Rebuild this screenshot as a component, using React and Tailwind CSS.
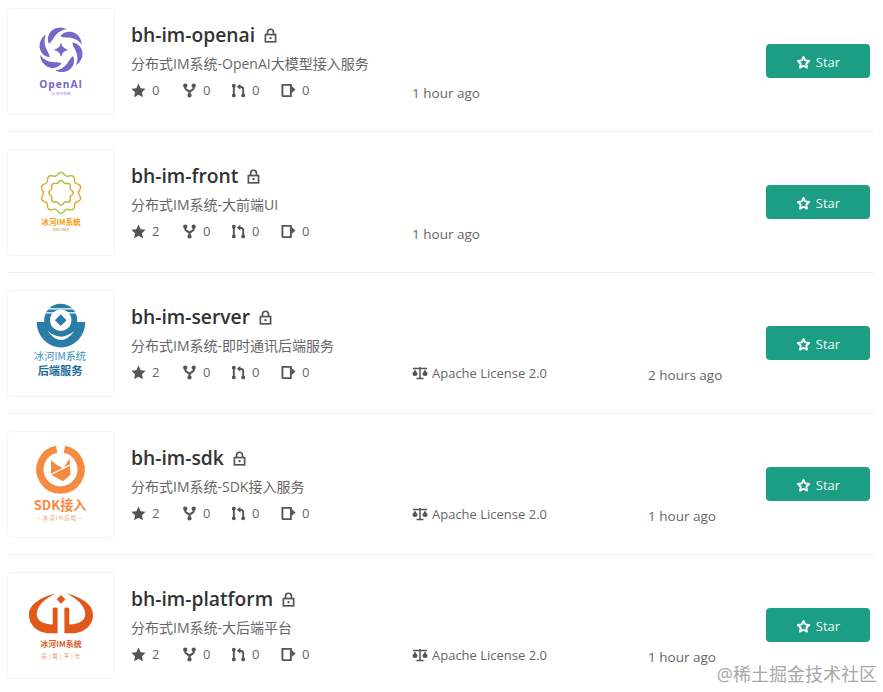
import React from "react";

const FONT = "font-['Open_Sans','Noto_Sans_CJK_SC',sans-serif]";

function wave(cx, cy, r, amp, n) {
  let d = "";
  for (let i = 0; i <= 240; i++) {
    const a = (i / 240) * Math.PI * 2;
    const rr = r + amp * Math.cos(n * a);
    const x = cx + rr * Math.sin(a);
    const y = cy - rr * Math.cos(a);
    d += (i ? "L" : "M") + x.toFixed(2) + " " + y.toFixed(2);
  }
  return d + "Z";
}

function blade() {
  const pts = [];
  const back = [];
  for (let i = 0; i <= 30; i++) {
    const t = i / 30;
    const a = ((-62 + 78 * t) * Math.PI) / 180;
    const rc = 14 + 8 * Math.sin((t * Math.PI) / 2);
    const h = 4.2 * Math.sin(Math.PI * Math.pow(t, 0.8));
    const ro = rc + h * 0.6;
    const ri = rc - h;
    pts.push(`${(ro * Math.sin(a)).toFixed(2)} ${(-ro * Math.cos(a)).toFixed(2)}`);
    back.unshift(`${(ri * Math.sin(a)).toFixed(2)} ${(-ri * Math.cos(a)).toFixed(2)}`);
  }
  return "M" + pts.concat(back).join("L") + "Z";
}

const svgFont = { fontFamily: "'Noto Sans CJK SC','Open Sans',sans-serif" };

function LogoOpenAI() {
  const d = blade();
  return (
    <svg viewBox="0 0 108 108" className="w-full h-full" style={svgFont}>
      <g transform="translate(54 42)" fill="#7866c8">
        {[0, 60, 120, 180, 240, 300].map((r) => (
          <path key={r} transform={`rotate(${r})`} d={d} />
        ))}
        <path d="M0 -6.500Q1 -1.500 6.500 0Q1 1.500 0 6.500Q-1 1.500 -6.500 0Q-1 -1.500 0 -6.500Z" stroke="#7866c8" strokeWidth="0.8" />
      </g>
      <text x="54" y="81" textAnchor="middle" fontSize="10.500" fontWeight="700" letterSpacing="1" fill="#7866c8" style={{ fontFamily: "'Open Sans',sans-serif" }}>OpenAI</text>
      <text x="54" y="88" textAnchor="middle" fontSize="4" fill="#9a8cd8">冰河IM系统</text>
    </svg>
  );
}

function LogoFront() {
  return (
    <svg viewBox="0 0 108 108" className="w-full h-full" style={svgFont}>
      <defs>
        <linearGradient id="wg" x1="0" x2="1" y1="0" y2="0">
          <stop offset="0" stopColor="#f2a02c" />
          <stop offset="0.32" stopColor="#a9c23c" />
          <stop offset="0.68" stopColor="#a9c23c" />
          <stop offset="1" stopColor="#f2a02c" />
        </linearGradient>
      </defs>
      <path d={wave(54, 44, 19.500, 1.500, 10)} fill="none" stroke="url(#wg)" strokeWidth="1.500" />
      <path d={wave(54, 44, 11.500, 1.100, 8)} fill="none" stroke="url(#wg)" strokeWidth="1.500" />
      <text x="54" y="77" textAnchor="middle" fontSize="7.800" fontWeight="700" fill="#f0a010">冰河IM系统</text>
      <text x="54" y="83" textAnchor="middle" fontSize="3.500" fill="#c79a40">前端UI服务</text>
    </svg>
  );
}

function LogoServer() {
  return (
    <svg viewBox="0 0 108 108" className="w-full h-full" style={svgFont}>
      <circle cx="53.700" cy="30" r="17" fill="#2b7ca6" />
      <path d="M29 32A25 26 0 0 0 79 32Z" fill="#2b7ca6" />
      <path d="M36 18.500H72M36 22.500H72" stroke="#fff" strokeWidth="1.300" />
      <circle cx="53.700" cy="30" r="11" fill="#fff" />
      <path d="M53.700 24L59.700 30L53.700 36L47.700 30Z" fill="#2b7ca6" />
      <path d="M40 41Q54 60 68 41Q54 53 40 41Z" fill="#fff" />
      <text x="53" y="71" textAnchor="middle" fontSize="10.500" fill="#3c8fbb">冰河IM系统</text>
      <text x="53" y="86" textAnchor="middle" fontSize="11.500" fontWeight="700" fill="#1f6e9c">后端服务</text>
    </svg>
  );
}

function LogoSdk() {
  return (
    <svg viewBox="0 0 108 108" className="w-full h-full" style={svgFont}>
      <path d="M57.500 17.700A21.200 21.200 0 1 1 49.500 17.700" fill="none" stroke="#f48b40" strokeWidth="7.500" />
      <path d="M43.700 29L49.700 34L56.300 37.300L63 27L63.700 44L56 50.700L43.700 44Z" fill="#f48b40" />
      <path d="M43 44L65 33" stroke="#fff" strokeWidth="1.300" />
      <text x="53" y="80" textAnchor="middle" fontSize="13.500" fontWeight="700" fill="#f48b40">SDK接入</text>
      <text x="53" y="90" textAnchor="middle" fontSize="5.500" letterSpacing="1.300" fill="#e8a070">—冰河IM后端—</text>
    </svg>
  );
}

function LogoPlatform() {
  const half = "M48 21C36 24 21 31 21 43C21 54 30 61 40 62L50.500 62L50.500 37C50.500 35 46 35 45.500 37L45.500 53C37 53 29 50 29 42C29 34 38 26 48 21Z";
  return (
    <svg viewBox="0 0 108 108" className="w-full h-full" style={svgFont}>
      <g fill="#e2571a">
        <path d={half} />
        <path d={half} transform="translate(108 0) scale(-1 1)" />
        <path d="M54 22.500L58.500 27L54 31.500L49.500 27Z" />
      </g>
      <text x="54" y="76" textAnchor="middle" fontSize="8.200" fontWeight="700" fill="#d9602a">冰河IM系统</text>
      <text x="54" y="87" textAnchor="middle" fontSize="5.500" fill="#e8855a" letterSpacing="0.500">后 | 端 | 平 | 台</text>
    </svg>
  );
}

const G = "#555";

function Lock() {
  return (
    <svg viewBox="0 0 14 16" className="w-[13px] h-[15px]" fill="none" stroke={G} strokeWidth="1.800">
      <path d="M3.800 7V4.500a3.200 3.200 0 0 1 6.400 0V7" />
      <rect x="1.500" y="7" width="11" height="7.800" />
      <circle cx="7" cy="10.800" r="1.300" fill={G} stroke="none" />
    </svg>
  );
}

function StarSolid() {
  return (
    <svg viewBox="0 0 16 16" className="w-[15px] h-[15px]" fill={G}>
      <path d="M8 .6l2.300 4.900 5.300.7-3.900 3.700 1 5.300L8 12.600 3.300 15.200l1-5.300L.4 6.200l5.300-.7z" />
    </svg>
  );
}

function Fork() {
  return (
    <svg viewBox="0 0 16 16" className="w-[15px] h-[15px]" fill={G} stroke={G} strokeWidth="2.200">
      <path d="M3.500 3v2.500C3.500 7.500 8 8 8 10V13M12.500 3v2.500C12.500 7.500 8 8 8 10" fill="none" />
      <circle cx="3.500" cy="2.800" r="1.200" />
      <circle cx="12.500" cy="2.800" r="1.200" />
      <circle cx="8" cy="13.200" r="1.200" />
    </svg>
  );
}

function PullRequest() {
  return (
    <svg viewBox="0 0 16 16" className="w-[15px] h-[15px]" fill={G} stroke={G} strokeWidth="2">
      <path d="M3 3V13" />
      <circle cx="3" cy="2.800" r="1.100" />
      <circle cx="3" cy="13.200" r="1.100" />
      <path d="M13 13V6.500C13 4.800 11.500 4 9 4" fill="none" />
      <circle cx="13" cy="13.200" r="1.100" />
      <path d="M10 .8L6.200 4L10 7.200Z" stroke="none" />
    </svg>
  );
}

function Mug() {
  return (
    <svg viewBox="0 0 16 16" className="w-[15px] h-[15px]" fill="none" stroke={G} strokeWidth="2">
      <path d="M1.500 2h9v12H2.500a1 1 0 0 1-1-1z" />
      <path d="M11 3L15.500 7L11 11z" fill={G} stroke="none" />
    </svg>
  );
}

function Law() {
  return (
    <svg viewBox="0 0 16 16" className="w-[16px] h-[16px]" fill={G} stroke={G}>
      <path d="M1 3.500H15M8 2V13.500M4.500 13.500H11.500" strokeWidth="1.500" fill="none" />
      <path d="M.5 8.500L3 4.500L5.500 8.500A2.500 2.500 0 0 1 .5 8.500Z" stroke="none" />
      <path d="M10.500 8.500L13 4.500L15.500 8.500A2.500 2.500 0 0 1 10.500 8.500Z" stroke="none" />
    </svg>
  );
}

function StarOutline() {
  return (
    <svg viewBox="0 0 16 16" className="w-[15px] h-[15px]" fill="none" stroke="#fff" strokeWidth="2" strokeLinejoin="round">
      <path d="M8 2l1.800 3.800 4.200.6-3 2.900.7 4.200L8 11.500l-3.700 2 .7-4.200-3-2.900 4.200-.6z" />
    </svg>
  );
}

function Meta({ icon, value, w }) {
  return (
    <div className={`flex items-center gap-[6px] ${w}`}>
      <span className="w-[15px] flex justify-center">{icon}</span>
      <span>{value}</span>
    </div>
  );
}

function Row({ name, desc, logo, stars, license, time, last }) {
  return (
    <div className={`ml-2 w-[866px] flex border-[#f0f0f0] ${last ? "" : "border-b pb-4 mb-[17px]"}`}>
      <div className="-ml-px w-[108px] h-[107px] shrink-0 rounded-[4px] border border-[#f6f6f6] bg-white">{logo}</div>
      <div className="ml-4 flex-1 pt-[15px]">
        <div className="flex items-center h-6 gap-[9px]">
          <span className="text-[19.300px] font-semibold leading-6 text-[#333]">{name}</span>
          <Lock />
        </div>
        <div className="mt-[7px] h-5 text-[14px] leading-5 text-[#666]">{desc}</div>
        <div className="mt-[6px] flex h-5 items-center text-[13px] leading-5 text-[#666]">
          <div className="flex w-[281px]">
            <Meta icon={<StarSolid />} value={stars} w="w-[51px]" />
            <Meta icon={<Fork />} value="0" w="w-[49px]" />
            <Meta icon={<PullRequest />} value="0" w="w-[50px]" />
            <Meta icon={<Mug />} value="0" w="w-[50px]" />
          </div>
          {license ? (
            <div className="flex w-[236px] items-center gap-1 pt-[2px]">
              <Law />
              <span>Apache License 2.0</span>
            </div>
          ) : null}
          <span className="pt-[6px] text-[13.500px]">{time}</span>
        </div>
      </div>
      <button className="mt-[36px] mr-1 flex h-[34px] w-[104px] items-center justify-center gap-[5px] rounded-[4px] bg-[#1b9e83] pt-[3px] text-[13px] text-[#f0fbf8]">
        <StarOutline />
        <span>Star</span>
      </button>
    </div>
  );
}

export default function App() {
  return (
    <div className={`relative h-[692px] w-[883px] overflow-hidden bg-white pt-2 ${FONT}`}>
      <Row name="bh-im-openai" desc="分布式IM系统-OpenAI大模型接入服务" logo={<LogoOpenAI />} stars="0" time="1 hour ago" />
      <Row name="bh-im-front" desc="分布式IM系统-大前端UI" logo={<LogoFront />} stars="2" time="1 hour ago" />
      <Row name="bh-im-server" desc="分布式IM系统-即时通讯后端服务" logo={<LogoServer />} stars="2" license time="2 hours ago" />
      <Row name="bh-im-sdk" desc="分布式IM系统-SDK接入服务" logo={<LogoSdk />} stars="2" license time="1 hour ago" />
      <Row name="bh-im-platform" desc="分布式IM系统-大后端平台" logo={<LogoPlatform />} stars="2" license time="1 hour ago" last />
      <div className="absolute right-[6px] top-[662px] text-[18px] leading-6 text-[#a8a8a8]">@稀土掘金技术社区</div>
    </div>
  );
}
